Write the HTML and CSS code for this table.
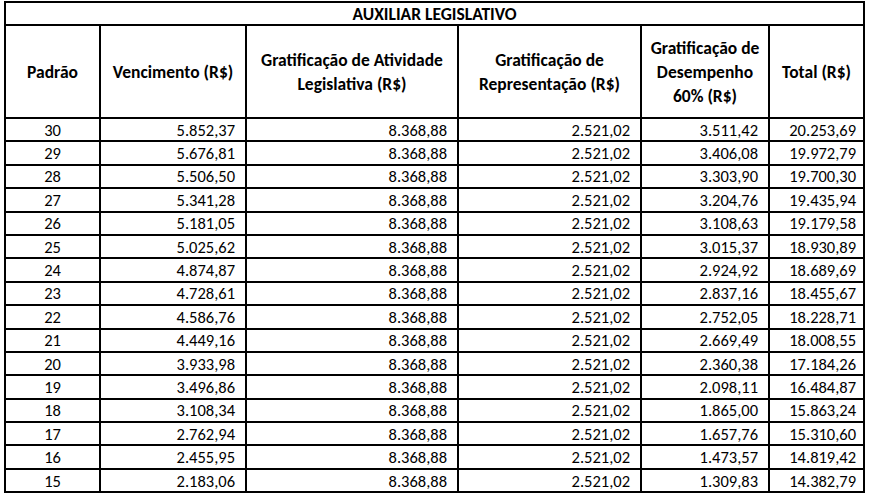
FILE: index.html
```html
<!DOCTYPE html>
<html lang="pt">
<head>
<meta charset="utf-8">
<link rel="stylesheet" href="styles.css">
</head>
<body>
<div class="page">
<table class="tabela">
  <colgroup>
    <col class="c1"><col class="c2"><col class="c3"><col class="c4"><col class="c5"><col class="c6">
  </colgroup>
  <thead>
    <tr class="titulo"><th colspan="6">AUXILIAR LEGISLATIVO</th></tr>
    <tr class="cab">
      <th>Padrão</th>
      <th>Vencimento (R$)</th>
      <th>Gratificação de Atividade<br>Legislativa (R$)</th>
      <th>Gratificação de<br>Representação (R$)</th>
      <th>Gratificação de<br>Desempenho<br>60% (R$)</th>
      <th>Total (R$)</th>
    </tr>
  </thead>
  <tbody>
    <tr><td class="pad">30</td><td>5.852,37</td><td>8.368,88</td><td>2.521,02</td><td>3.511,42</td><td class="tot">20.253,69</td></tr>
    <tr><td class="pad">29</td><td>5.676,81</td><td>8.368,88</td><td>2.521,02</td><td>3.406,08</td><td class="tot">19.972,79</td></tr>
    <tr><td class="pad">28</td><td>5.506,50</td><td>8.368,88</td><td>2.521,02</td><td>3.303,90</td><td class="tot">19.700,30</td></tr>
    <tr><td class="pad">27</td><td>5.341,28</td><td>8.368,88</td><td>2.521,02</td><td>3.204,76</td><td class="tot">19.435,94</td></tr>
    <tr><td class="pad">26</td><td>5.181,05</td><td>8.368,88</td><td>2.521,02</td><td>3.108,63</td><td class="tot">19.179,58</td></tr>
    <tr><td class="pad">25</td><td>5.025,62</td><td>8.368,88</td><td>2.521,02</td><td>3.015,37</td><td class="tot">18.930,89</td></tr>
    <tr><td class="pad">24</td><td>4.874,87</td><td>8.368,88</td><td>2.521,02</td><td>2.924,92</td><td class="tot">18.689,69</td></tr>
    <tr><td class="pad">23</td><td>4.728,61</td><td>8.368,88</td><td>2.521,02</td><td>2.837,16</td><td class="tot">18.455,67</td></tr>
    <tr><td class="pad">22</td><td>4.586,76</td><td>8.368,88</td><td>2.521,02</td><td>2.752,05</td><td class="tot">18.228,71</td></tr>
    <tr><td class="pad">21</td><td>4.449,16</td><td>8.368,88</td><td>2.521,02</td><td>2.669,49</td><td class="tot">18.008,55</td></tr>
    <tr><td class="pad">20</td><td>3.933,98</td><td>8.368,88</td><td>2.521,02</td><td>2.360,38</td><td class="tot">17.184,26</td></tr>
    <tr><td class="pad">19</td><td>3.496,86</td><td>8.368,88</td><td>2.521,02</td><td>2.098,11</td><td class="tot">16.484,87</td></tr>
    <tr><td class="pad">18</td><td>3.108,34</td><td>8.368,88</td><td>2.521,02</td><td>1.865,00</td><td class="tot">15.863,24</td></tr>
    <tr><td class="pad">17</td><td>2.762,94</td><td>8.368,88</td><td>2.521,02</td><td>1.657,76</td><td class="tot">15.310,60</td></tr>
    <tr><td class="pad">16</td><td>2.455,95</td><td>8.368,88</td><td>2.521,02</td><td>1.473,57</td><td class="tot">14.819,42</td></tr>
    <tr><td class="pad">15</td><td>2.183,06</td><td>8.368,88</td><td>2.521,02</td><td>1.309,83</td><td class="tot">14.382,79</td></tr>
  </tbody>
</table>
</div>
</body>
</html>
```

FILE: styles.css
```css
html, body {
  margin: 0;
  padding: 0;
  background: #ffffff;
}
.page {
  padding: 1px 0 0 4px;
}
.tabela {
  border-collapse: collapse;
  table-layout: fixed;
  width: 859px;
  font-family: Carlito, Calibri, Lato, "Liberation Sans", sans-serif;
  font-size: 16.5px;
  color: #000;
}
.c1 { width: 95px; }
.c2 { width: 146px; }
.c3 { width: 212px; }
.c4 { width: 183px; }
.c5 { width: 128px; }
.c6 { width: 95px; }
.tabela th, .tabela td {
  border: 2px solid #000;
  padding: 0;
}
.titulo th {
  height: 21px;
  font-size: 17.5px;
  font-weight: bold;
  text-align: center;
  line-height: 20px;
}
.cab th {
  height: 91px;
  font-size: 17.5px;
  font-weight: bold;
  text-align: center;
  vertical-align: middle;
  line-height: 24px;
}
.tabela td {
  height: 21.4px;
  line-height: 20px;
  text-align: right;
  padding-right: 10px;
}
.tabela td.pad {
  text-align: center;
  padding-right: 0;
}
.tabela td.tot {
  padding-right: 7px;
}
```
